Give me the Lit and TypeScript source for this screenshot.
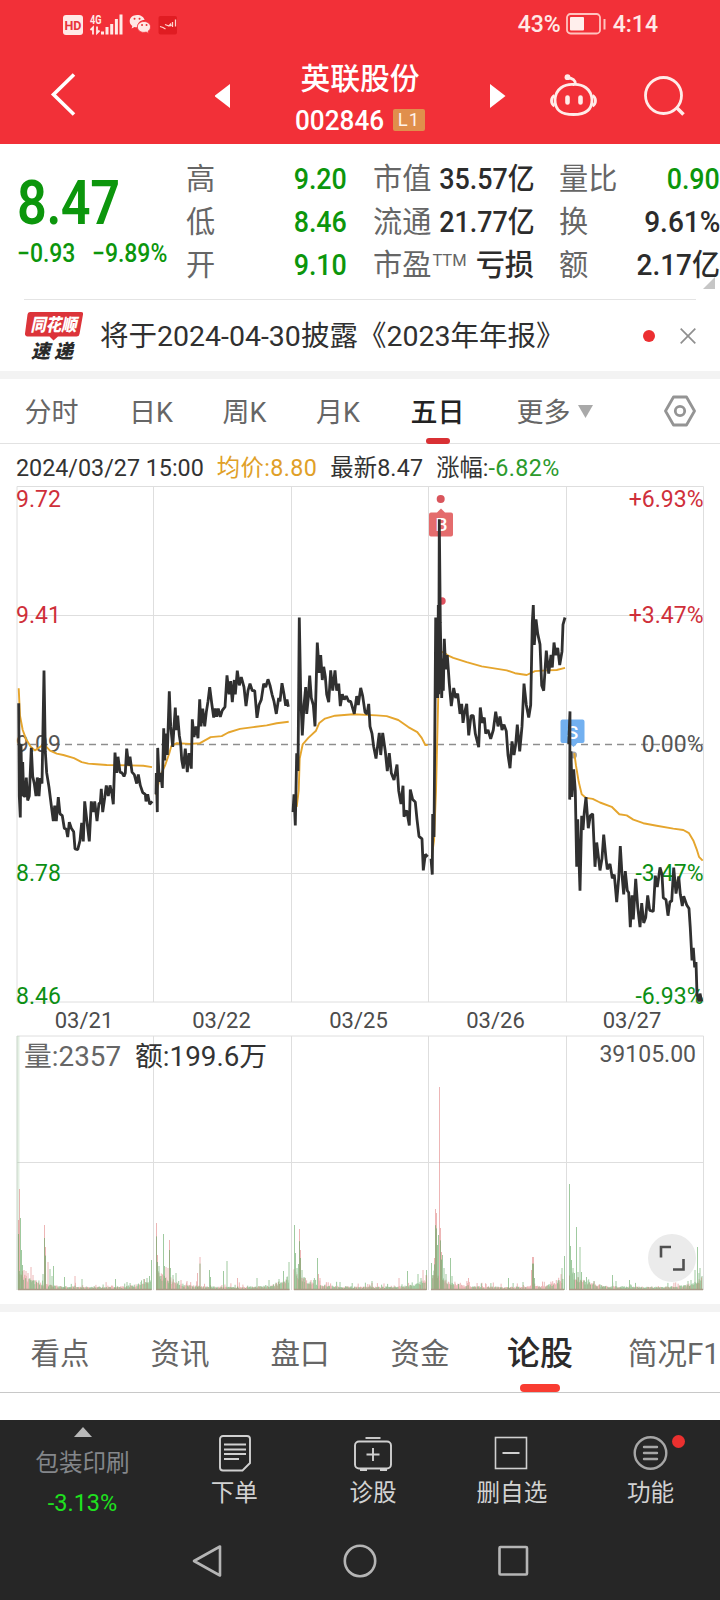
import { LitElement, html, svg, css } from "lit";
import { customElement } from "lit/decorators.js";

type Pt = [number, number];

interface Session {
  label: string;
  labelX: number;
  origin: number;
  price: string;
  average: string;
  from: number;
  to: number;
  spikes: Pt[];
  bias: number;
}

const SESSIONS: Session[] = [
  {
    label: "03/21", labelX: 84, origin: 0, from: 18.5, to: 151, bias: 0.5,
    price: "56,625 58,885 61,945 63,740 66,885 68,790 71,885 76,885 79,833 83,897 88,885 94,750 98,830 103,850 108,885 112,833 117,885 121,835 126,850 132,533 136,760 140,820 147,860 153,905 160,955 164,912 169,955 175,888 180,935 187,940 193,975 199,978 203,1000 208,958 214,975 221,985 225,1033 233,1035 240,1010 245,960 250,1012 254,900 260,950 268,1012 274,900 280,930 284,900 291,955 297,905 301,905 304,865 308,930 314,890 319,855 325,885 330,855 336,880 340,908 345,763 350,820 354,775 360,818 366,820 372,830 376,820 380,752 386,800 390,775 396,818 403,825 410,850 415,825 421,855 428,875 436,880 438,900 443,880 449,908 457,900",
    average: "56,583 60,660 68,700 78,725 92,747 105,757 132,740 150,758 170,766 190,770 222,779 245,790 265,794 290,796 320,798 390,799 430,800 456,804",
    spikes: [[18.5, 70], [19.5, 101], [20.5, 72], [21.5, 40], [22.5, 25], [24, 20], [26, 19], [28, 17], [31, 23], [33, 15], [36, 10], [43, 16], [44.5, 65], [45.5, 43], [48, 28], [50, 21], [52, 14], [53.5, 24], [64.5, 13], [75, 14], [82, 11], [115.5, 11], [127, 8], [141, 8], [147, 12], [149.5, 14], [151.5, 30]],
  },
  {
    label: "03/22", labelX: 221.5, origin: 0, from: 156.5, to: 289, bias: 0.45,
    price: "468,880 469,820 472,930 473,750 478,845 482,820 487,862 491,695 494,785 497,710 502,770 508,592 512,690 518,747 526,637 529,700 533,660 538,715 542,740 545,783 550,808 556,752 562,818 567,765 574,808 577,670 582,720 588,690 594,723 599,614 603,690 608,640 614,690 619,650 624,620 629,580 635,625 641,665 646,640 650,663 655,640 661,663 667,645 675,635 681,547 687,600 692,563 697,622 703,560 706,600 712,534 718,575 724,552 732,580 738,633 744,590 750,570 757,590 764,590 771,666 777,630 784,615 791,570 797,580 804,558 810,575 816,600 822,620 829,655 836,610 840,620 846,569 852,600 857,632 861,615 865,635",
    average: "468,882 480,830 495,800 508,765 514,745 530,737 570,739 600,737 632,720 665,717 685,707 720,697 760,692 800,687 830,681 866,677",
    spikes: [[156.5, 67], [157.5, 35], [159, 24], [161, 14], [163.5, 56], [164.5, 24], [166, 23], [168, 22], [169.5, 50], [170.5, 22], [173, 15], [176, 17], [181, 10], [187, 9], [197.5, 17], [200, 33], [209.5, 20], [210.5, 13], [223.5, 19], [227, 29], [237.5, 12], [257, 12], [269, 10], [279, 11], [283.5, 19], [287, 13], [289, 28]],
  },
  {
    label: "03/25", labelX: 358.5, origin: 280, from: 294, to: 427, bias: 0.55,
    price: "39,930 42,880 46,967 50,765 54,815 58,385 62,600 67,715 72,630 77,580 80,655 85,610 89,548 94,610 100,630 105,690 112,455 118,540 122,490 127,560 131,523 136,550 140,600 146,622 152,533 158,590 165,533 170,590 176,570 181,633 187,600 193,615 199,605 206,620 212,620 223,655 230,605 235,630 242,582 248,605 255,650 261,655 266,627 270,690 276,710 281,747 288,780 298,708 302,770 308,708 316,760 322,815 328,765 334,820 342,840 351,797 356,870 363,907 369,856 372,943 380,925 388,967 391,867 398,895 406,902 411,950 417,998 426,1005 430,1093 436,1048 443,1055",
    average: "50,915 56,870 59,780 68,740 85,722 108,702 118,680 135,668 165,660 220,656 290,659 320,661 355,672 385,692 412,706 425,722 436,742 443,742",
    spikes: [[294.5, 65], [295.5, 37], [297, 22], [298.5, 26], [299.5, 61], [300.5, 40], [302, 20], [304, 13], [311, 10], [317.5, 32], [318.5, 16], [320, 12], [340, 8], [372, 9], [399, 12], [407.5, 19], [418, 16], [421, 12], [423, 20], [426.5, 20]],
  },
  {
    label: "03/26", labelX: 495.5, origin: 280, from: 431.5, to: 563, bias: 0.3,
    price: "453,1060 457,1105 458,935 462,1000 467,385 469,610 471,385 473,610 475,350 476,600 478,110 481,400 485,610 488,500 490,590 493,445 497,530 502,490 508,570 514,633 521,582 527,610 533,598 540,655 545,627 549,680 554,650 560,627 566,715 573,660 580,660 586,710 596,748 601,637 607,680 613,665 617,710 624,700 632,725 640,700 647,649 654,690 660,662 666,700 672,685 679,703 684,770 690,807 696,732 702,770 707,740 712,685 719,760 726,690 732,570 739,630 746,665 752,630 757,400 760,350 763,462 768,390 773,430 780,460 785,575 791,590 799,478 806,542 813,490 817,525 822,455 827,490 833,470 839,518 846,480 849,405 855,385",
    average: "455,1055 462,1010 468,870 475,600 482,480 495,485 505,492 520,498 560,510 605,522 680,533 705,541 740,546 765,535 800,533 830,532 855,526",
    spikes: [[431.5, 27], [433, 15], [434.5, 32], [435.5, 81], [436.5, 77], [437.5, 45], [438.5, 55], [439.5, 203], [440.5, 62], [441.5, 38], [442.5, 35], [444, 22], [446, 16], [450.5, 32], [452, 14], [468.5, 12], [508.5, 12], [523, 8], [531.5, 20], [532.5, 33], [533.5, 33], [534.5, 12], [559, 10], [562, 22], [564.5, 34]],
  },
  {
    label: "03/27", labelX: 632, origin: 500, from: 569.5, to: 702, bias: 0.6,
    price: "206,740 210,648 209,895 213,760 216,887 221,810 226,870 230,1083 233,950 240,1150 245,940 249,980 253,930 258,888 265,975 271,940 278,935 285,1083 290,1015 300,1093 306,1060 311,993 318,1060 322,1090 330,1075 337,1115 343,1105 350,1182 356,1115 361,1025 366,1105 371,1160 376,1095 382,1150 386,1155 391,1252 396,1163 400,1230 407,1117 413,1195 420,1252 425,1185 431,1240 437,1225 443,1163 449,1205 460,1208 466,1108 472,1140 480,1085 486,1105 490,1170 498,1175 504,1220 510,1180 515,1180 521,1085 528,1158 536,1110 541,1160 547,1193 551,1165 560,1190 567,1200 571,1255 576,1345 580,1310 584,1365 588,1350 591,1440 597,1460 600,1438 605,1460",
    average: "223,765 228,800 236,845 245,880 258,890 278,893 300,903 335,915 358,936 380,939 400,951 430,961 470,968 520,976 550,980 567,989 580,1009 590,1034 597,1055 608,1066",
    spikes: [[569.5, 106], [570.5, 44], [571.5, 30], [573, 22], [574.5, 17], [576.5, 63], [578, 18], [580, 43], [581.5, 18], [586.5, 13], [594, 9], [612.5, 15], [616, 9], [629.5, 10], [688, 9], [691, 10], [695, 20], [697.5, 43], [699, 17], [700, 22], [702, 14]],
  },
];

const GRID_X = [17, 153.5, 291.5, 428.5, 566.5, 703.5];

/** Converts a packed series into plot coordinates. */
function trace(series: string, origin: number): string {
  return series
    .split(" ")
    .map((pair) => {
      const [x, y] = pair.split(",").map(Number);
      return `${(origin + x / 3).toFixed(1)},${(480 + y / 2.8).toFixed(1)}`;
    })
    .join(" ");
}

/** Background turnover: taller after the open and before the close. */
function volume(s: Session): { green: string; red: string } {
  let seed = Math.round(s.from * 13) + 7;
  const rnd = () => {
    seed = (seed * 1103515245 + 12345) % 2147483648;
    return seed / 2147483648;
  };
  let green = "";
  let red = "";
  const bar = (x: number, h: number) => `M${x.toFixed(1)} 1290v-${h.toFixed(1)}`;
  for (let x = s.from; x <= s.to; x += 0.6) {
    const t = (x - s.from) / (s.to - s.from);
    const env = 3 + 17 * Math.exp(-t * 9) + 9 * Math.exp(-(1 - t) * 12);
    const h = env * (0.6 + 0.5 * rnd()) + (rnd() > 0.85 ? 5 * rnd() : 0);
    if (rnd() < s.bias) green += bar(x, h);
    else red += bar(x, h);
  }
  s.spikes.forEach(([x, h], i) => {
    const up = (i * 7 + Math.round(x)) % 10 > s.bias * 10 || h > 150;
    if (up && s.label !== "03/27") red += bar(x, h);
    else green += bar(x, h);
    if (h > 30 && h < 100 && s.label !== "03/27") green += bar(x, h * 0.8);
  });
  return { green, red };
}

@customElement("stock-chart")
class StockChart extends LitElement {
  static styles = css`
    :host { display: block; position: relative; height: 824px; }
    .plot { display: block; width: 720px; height: 824px; }
    text { font-family: Roboto, "Noto Sans CJK SC", sans-serif; font-size: 23px; }
    .grid { stroke: #dedede; stroke-width: 1; fill: none; }
    .zero { stroke: #8e8e8e; stroke-width: 1.6; stroke-dasharray: 7 5; }
    .up { fill: #cf2f3a; }
    .down { fill: #0c8f14; }
    .flat { fill: #555; }
    .date { fill: #4c4c4c; font-size: 22px; text-anchor: middle; }
    .end { text-anchor: end; }
    .avg { fill: none; stroke: #e5a52d; stroke-width: 1.9; stroke-linejoin: round; }
    .price { fill: none; stroke: #303030; stroke-width: 2.8; stroke-linejoin: bevel; }
    .green { stroke: #62a862; stroke-width: 1; opacity: 0.6; }
    .red { stroke: #dc7070; stroke-width: 1; opacity: 0.5; }
    .mark { fill: #fff; font-size: 19px; font-weight: 500; text-anchor: middle; }
    .qty { fill: #666; font-size: 27.8px; }
    .amt { fill: #333; font-size: 27.8px; }
    .expand {
      position: absolute; left: 648px; top: 754px; width: 48px; height: 48px;
      border-radius: 50%; background: #ebebeb;
    }
  `;

  render() {
    return html`
      <svg class="plot" viewBox="0 480 720 824">
        <path class="grid" d="M17 486.5H703.5M17 615.5H703.5M17 873.5H703.5M17 1002H703.5M17 1036H703.5M17 1162.5H703.5" />
        ${GRID_X.map((x) => svg`<path class="grid" d="M${x} 486.500V1002M${x} 1036V1290" />`)}
        <path class="zero" d="M17 744.500H703" />
        <rect x="16.500" y="1036" width="3" height="254" fill="#9cc79c" opacity=".27" />
        ${SESSIONS.map((s) => {
          const v = volume(s);
          return svg`<path class="red" d=${v.red} /><path class="green" d=${v.green} />`;
        })}
        <path d="M18 1289.500H151.500M156 1289.500H289.500M294 1289.500H426.500M431 1289.500H564M569 1289.500H703" stroke="#a89a86" stroke-width="1.300" />

        <text class="up" x="16" y="507">9.72</text>
        <text class="up" x="16" y="622.500">9.41</text>
        <text class="flat" x="16" y="752">9.09</text>
        <text class="down" x="16" y="881">8.78</text>
        <text class="down" x="16" y="1003.500">8.46</text>
        <text class="up end" x="703.500" y="507">+6.93%</text>
        <text class="up end" x="703.500" y="622.500">+3.47%</text>
        <text class="flat end" x="703.500" y="752">0.00%</text>
        <text class="down end" x="703.500" y="881">-3.47%</text>
        <text class="down end" x="703.500" y="1003.500">-6.93%</text>

        <circle cx="440.700" cy="499" r="4" fill="#d9555c" />
        <path d="M431 512.500h6l4-4 4 4h6a2 2 0 0 1 2 2v20a2 2 0 0 1-2 2h-20a2 2 0 0 1-2-2v-20a2 2 0 0 1 2-2z" fill="#e46c6d" />
        <text class="mark" x="441.500" y="531">B</text>
        <circle cx="442" cy="601" r="3.700" fill="#e0525f" />
        <path d="M562.500 719.500h20a2 2 0 0 1 2 2v19.500a2 2 0 0 1-2 2h-5l-4 4-4-4h-7a2 2 0 0 1-2-2V721.500a2 2 0 0 1 2-2z" fill="#72b0f0" />
        <text class="mark" x="572.500" y="738.500">S</text>
        <circle cx="573.500" cy="755" r="3.500" fill="#a0a4ac" />

        ${SESSIONS.map(
          (s) => svg`
            <polyline class="avg" points=${trace(s.average, s.origin)} />
            <polyline class="price" points=${trace(s.price, s.origin)} />
            <text class="date" x=${s.labelX} y="1028">${s.label}</text>`
        )}
        <text class="qty" x="24" y="1066">量:2357</text>
        <text class="amt" x="135" y="1066">额:199.6万</text>
        <text class="flat end" x="696" y="1062">39105.00</text>
      </svg>
      <svg class="expand" viewBox="0 0 48 48" fill="none" stroke="#505050" stroke-width="2.600">
        <path d="M13 23.500V13H23M35.500 25V35.500H25" />
      </svg>
    `;
  }
}

@customElement("app-root")
class AppRoot extends LitElement {
  static styles = css`
    :host {
      display: flex; flex-direction: column; width: 720px; height: 1600px; overflow: hidden;
      background: #fff; color: #333; line-height: 1;
      font-family: Roboto, "Noto Sans CJK SC", sans-serif;
    }
    * { box-sizing: border-box; }
    svg { display: block; flex: none; }

    .header { height: 144px; background: #f23038; color: #fff; display: flex; flex-direction: column; flex: none; }
    .status { height: 48px; padding: 0 62px 0 63px; display: flex; align-items: center; justify-content: space-between; }
    .clock { display: flex; align-items: center; font-size: 23px; font-weight: 500; color: #ffe9e6; gap: 5px; }
    .clock span { padding-top: 1px; }
    .clock .time { margin-left: 2px; }
    .bar { height: 96px; display: grid; grid-template-columns: 295px 1fr 295px; }
    .left { display: flex; align-items: flex-start; padding: 25px 0 0 50px; gap: 139px; }
    .left .tri, .right .tri { margin-top: 10px; }
    .right { display: flex; align-items: flex-start; padding: 25px 0 0 65px; }
    .robot { margin-left: 43px; }
    .search { margin-left: 45px; margin-top: -3px; }
    .title { display: flex; flex-direction: column; align-items: center; padding-top: 15px; white-space: nowrap; }
    .name { font-size: 29.8px; font-weight: 500; line-height: 32px; }
    .code { display: flex; align-items: center; margin-top: 12px; height: 26px; align-self: flex-start; }
    .code .num { font-size: 27.5px; font-weight: 500; width: 89px; padding-top: 1px; }
    .code .num i { font-style: normal; display: inline-block; transform: scaleX(0.95); transform-origin: 0 50%; }
    .l1 { width: 32px; height: 22px; border-radius: 2px; background: #e08f4c; font-size: 18.5px; line-height: 22px; text-align: center; margin-left: 9px; letter-spacing: 1px; color: #fff3ea; }

    .quote { position: relative; height: 155px; flex: none; display: grid; grid-template-columns: 186px 161px 26px 161px 25px 161px; }
    .last { padding: 31px 0 0 17px; color: #0c960c; white-space: nowrap; }
    .big { font-size: 61.5px; font-weight: 600; line-height: 56px; transform: scaleX(0.85); transform-origin: 0 0; letter-spacing: -0.5px; }
    .chg { display: flex; margin-top: 8px; font-size: 25.5px; font-weight: 500; line-height: 28px; }
    .chg span { transform: scaleX(0.9); transform-origin: 0 0; width: 75px; }
    .col { display: flex; flex-direction: column; padding-top: 13.5px; font-size: 29.2px; white-space: nowrap; }
    .row { height: 43.3px; display: flex; align-items: center; justify-content: space-between; color: #666; }
    .row b { font-weight: 500; color: #2c2c2c; display: inline-block; transform: scaleX(0.92); transform-origin: 100% 50%; }
    .row b.g { color: #0c960c; }
    .row b.w { transform: scaleX(0.96); }
    .row b.cn { transform: none; }
    .row .ttm { font-size: 16.5px; align-self: flex-start; margin: 9px auto 0 1px; }
    .fold { position: absolute; right: 5px; bottom: 10px; }
    .rule { height: 1px; margin: 0 24px; background: #e4e4e4; flex: none; }

    .news { height: 71px; flex: none; display: flex; align-items: center; padding: 0 24px; }
    .news .msg { font-size: 28.5px; margin-left: 15px; padding-top: 4px; flex: 1; white-space: nowrap; color: #303030; }
    .dot { width: 12px; height: 12px; border-radius: 50%; background: #ec2f31; margin-right: 25px; }
    .logo { font-family: "Noto Sans CJK SC", sans-serif; font-weight: 900; font-style: italic; overflow: visible; }

    .band { height: 8px; background: #f3f3f3; flex: none; }
    .periods { height: 65px; flex: none; display: flex; align-items: center; padding: 0 24px 1px 24.5px; font-size: 27px; color: #666; border-bottom: 1px solid #e2e2e2; white-space: nowrap; }
    .periods > span { padding-top: 5px; }
    .periods .p1 { width: 104.5px; }
    .periods .p2 { width: 93.5px; }
    .periods .p3 { width: 93.5px; }
    .periods .p4 { width: 94.5px; }
    .periods .p5 { width: 106px; }
    .periods .more { display: flex; align-items: center; gap: 7px; flex: 1; }
    .periods .more svg { margin-top: -4px; }
    .on { position: relative; color: #222; font-weight: 500; }
    .on::after { content: ""; position: absolute; left: 15.5px; bottom: -17px; width: 24px; height: 6px; border-radius: 3px; background: #d93034; }
    .info { height: 36px; flex: none; display: flex; align-items: center; padding: 13px 0 0 16px; font-size: 23.3px; color: #333; white-space: pre; }
    .info .y { color: #e0a028; margin: 0 13px; letter-spacing: 0.4px; }
    .info .n { letter-spacing: 0.15px; }
    .info .r { margin-left: 13px; }
    .info .g { color: #2c9a2c; letter-spacing: 0.4px; }

    .tabs { height: 81px; flex: none; display: flex; border-bottom: 1px solid #c8c8c8; font-size: 29.5px; color: #666; white-space: nowrap; }
    .tab { width: 120px; flex: none; text-align: center; line-height: 80px; padding-top: 2px; position: relative; }
    .tab.last-tab { text-align: left; padding-left: 28px; }
    .tab.sel { font-size: 33px; font-weight: 500; color: #2b2b2b; }
    .tab.sel::after { content: ""; position: absolute; left: 40px; bottom: 0; width: 40px; height: 8px; border-radius: 4px; background: #f93c31; }
    .gap { height: 27px; flex: none; }

    .dock { height: 100px; flex: none; background: #262626; display: grid; grid-template-columns: 165px repeat(4, 138.75px); color: #d2d2d2; font-size: 23.6px; }
    .sector { display: flex; flex-direction: column; align-items: center; padding-top: 7px; color: #84878b; }
    .sector .nm { margin-top: 14px; line-height: 24px; }
    .sector .pc { margin-top: 16px; color: #1fe01f; font-size: 23.5px; line-height: 24px; }
    .act { position: relative; display: flex; flex-direction: column; align-items: center; padding-top: 12px; }
    .act span { margin-top: 7px; line-height: 24px; }
    .badge { position: absolute; left: 91px; top: 15px; width: 13px; height: 13px; border-radius: 50%; background: #ea302f; }
    .nav { height: 80px; flex: none; background: #262626; display: flex; justify-content: center; padding: 23px 0 0 0; gap: 118.5px; }
  `;

  render() {
    return html`
      <div class="header">
        <div class="status">
          <svg width="116" height="24" viewBox="0 0 116 24">
            <rect x="0" y="3" width="20" height="20" rx="3" fill="#ffe9e6" />
            <text x="10" y="17.500" font-size="12.500" font-weight="700" fill="#e8333a" text-anchor="middle" font-family="Roboto">HD</text>
            <text x="27" y="11.500" font-size="12" font-weight="700" fill="#ffe9e6" textLength="11.500" lengthAdjust="spacingAndGlyphs" font-family="Roboto">4G</text>
            <path d="M27.500 18l2.500-2.500v7M36.500 18.500l-2.500 2.500v-6.500" stroke="#ffe9e6" stroke-width="1.800" fill="none" />
            <path d="M39.500 22.500v-3M44 22.500V15M48.700 22.500V12M53.400 22.500V7M58 22.500V2.500" stroke="#ffe9e6" stroke-width="3" />
            <path d="M74 3c-4.300 0-7.300 2.800-7.300 6.200 0 2 1 3.600 2.600 4.700l-.7 2.600 2.900-1.500c1 .3 1.900.4 2.900.3 0-5 3.500-7.300 7.200-7.200C80.800 5 78 3 74 3z" fill="#ffe9e6" />
            <path d="M81 9.500c-3.800 0-6.600 2.300-6.600 5.400s2.800 5.500 6.600 5.500c.8 0 1.500-.1 2.200-.3l2.500 1.400-.6-2.300c1.500-1 2.400-2.500 2.400-4.300 0-3.100-2.900-5.400-6.500-5.400z" fill="#ffe9e6" stroke="#f23038" stroke-width=".8" />
            <path d="M71.500 6.800h.1M76.500 6.800h.1M79 13h.1M83.500 13h.1" stroke="#e8333a" stroke-width="1.900" stroke-linecap="round" />
            <rect x="95.500" y="4" width="18.500" height="18.500" rx="2" fill="#e01c22" />
            <path d="M97 14.500l3 1 2.500 1.500M102 12.500l4 1.500 2-2.500M107 14l1.500-1M109.500 10v5M112.500 7.500v7" stroke="#ffd3cc" stroke-width="1.300" fill="none" />
          </svg>
          <div class="clock">
            <span>43%</span>
            <svg width="40" height="22" viewBox="0 0 40 22">
              <rect x="1" y="1" width="33" height="19.500" rx="3.500" fill="none" stroke="#ffc4bf" stroke-width="1.800" />
              <rect x="4" y="4" width="14" height="13.500" rx="1" fill="#ffefec" />
              <path d="M38.500 6v10.500" stroke="#ffc4bf" stroke-width="2" />
            </svg>
            <span class="time">4:14</span>
          </div>
        </div>
        <div class="bar">
          <div class="left">
            <svg width="26" height="44" viewBox="0 0 26 44"><path d="M24 1.500L3.500 21.500L24 41.500" stroke="#fff" stroke-width="3.600" fill="none" /></svg>
            <svg class="tri" width="16" height="26" viewBox="0 0 16 26"><path d="M15 1v24L-.5 13z" fill="#fff" /></svg>
          </div>
          <div class="title">
            <div class="name">英联股份</div>
            <div class="code"><span class="num"><i>002846</i></span><span class="l1">L1</span></div>
          </div>
          <div class="right">
            <svg class="tri" width="16" height="26" viewBox="0 0 16 26"><path d="M0 1v24L15.500 13z" fill="#fff" /></svg>
            <svg class="robot" width="48" height="46" viewBox="0 0 48 46" fill="none" stroke="#ffece9" stroke-width="2.800">
              <path d="M24.500 11.500C33.500 11 42.500 15.500 43 27C43 38.500 35 41.500 24.500 41.500S6 38.500 6 27C6.500 15.500 15.500 11 24.500 11.500z" />
              <path d="M26.500 11.500C26.500 7 24 5.500 18 4.500" />
              <circle cx="18.500" cy="4.200" r="2.900" fill="#ffece9" stroke="none" />
              <path d="M5.500 22.500C1.500 25 1.500 30.500 5.500 33M43.500 22.500C47.500 25 47.500 30.500 43.500 33" />
              <path d="M18.500 24.500v5M31.500 24.500v5" stroke-width="4.600" stroke-linecap="round" />
            </svg>
            <svg class="search" width="44" height="48" viewBox="0 0 44 48" fill="none" stroke="#ffece9" stroke-width="2.800">
              <circle cx="21.500" cy="25.500" r="18" /><path d="M34.500 37.500L41.500 44.500" stroke-width="3.500" />
            </svg>
          </div>
        </div>
      </div>

      <div class="quote">
        <div class="last">
          <div class="big">8.47</div>
          <div class="chg"><span>−0.93</span><span>−9.89%</span></div>
        </div>
        <div class="col">
          <div class="row">高<b class="g">9.20</b></div>
          <div class="row">低<b class="g">8.46</b></div>
          <div class="row">开<b class="g">9.10</b></div>
        </div>
        <div></div>
        <div class="col">
          <div class="row">市值<b>35.57亿</b></div>
          <div class="row">流通<b>21.77亿</b></div>
          <div class="row">市盈<span class="ttm">TTM</span><b class="cn">亏损</b></div>
        </div>
        <div></div>
        <div class="col">
          <div class="row">量比<b class="g">0.90</b></div>
          <div class="row">换<b class="w">9.61%</b></div>
          <div class="row">额<b class="w">2.17亿</b></div>
        </div>
        <svg class="fold" width="12" height="12" viewBox="0 0 12 12"><path d="M12 0v12H0z" fill="#c6c6c6" /></svg>
      </div>
      <div class="rule"></div>

      <div class="news">
        <svg class="logo" width="61" height="56" viewBox="0 -4 61 56">
          <path d="M6 0H57a2 2 0 0 1 2 2.400L55.500 22a3 3 0 0 1-3 2.500H34l-4.500 4-4-4H3.500A2.500 2.500 0 0 1 1 21.500L3.500 2.400A2.600 2.600 0 0 1 6 0z" fill="#dc343a" />
          <text x="6.500" y="19" font-size="17.500" fill="#fff" textLength="46" lengthAdjust="spacingAndGlyphs">同花顺</text>
          <text x="7" y="45.500" font-size="19" fill="#2a2a2a">速</text>
          <text x="30" y="45.500" font-size="19" fill="#2a2a2a">递</text>
        </svg>
        <span class="msg">将于2024-04-30披露《2023年年报》</span>
        <span class="dot"></span>
        <svg width="16" height="16" viewBox="0 0 16 16"><path d="M.7.7l14.600 14.600M15.300.7L.7 15.300" stroke="#8f8f8f" stroke-width="1.700" /></svg>
      </div>

      <div class="band"></div>
      <div class="periods">
        <span class="p1">分时</span><span class="p2">日K</span><span class="p3">周K</span><span class="p4">月K</span>
        <span class="p5 on">五日</span>
        <span class="more">更多<svg width="15" height="13" viewBox="0 0 15 13"><path d="M0 0h15L7.500 13z" fill="#a9a9a9" /></svg></span>
        <svg width="32" height="32" viewBox="0 0 32 32" fill="none" stroke="#949494" stroke-width="2.800" stroke-linejoin="round">
          <path d="M9.500 2h13L30.500 16l-8 14h-13L1.500 16z" /><circle cx="16" cy="16" r="4.700" />
        </svg>
      </div>
      <div class="info"><span>2024/03/27 15:00</span><span class="y">均价:8.80</span><span class="n">最新8.47</span><span class="r">涨幅:</span><span class="g">-6.82%</span></div>
      <stock-chart></stock-chart>

      <div class="band"></div>
      <div class="tabs">
        <span class="tab">看点</span><span class="tab">资讯</span><span class="tab">盘口</span><span class="tab">资金</span>
        <span class="tab sel">论股</span><span class="tab last-tab">简况F1</span>
      </div>
      <div class="gap"></div>

      <div class="dock">
        <div class="sector">
          <svg width="18" height="10" viewBox="0 0 18 10"><path d="M9 0l9 10H0z" fill="#b8b8b8" /></svg>
          <span class="nm">包装印刷</span><span class="pc">-3.13%</span>
        </div>
        <div class="act">
          <svg width="38" height="42" viewBox="0 0 38 42" fill="none" stroke="#d0d0d0" stroke-width="1.900">
            <path d="M8 4H32a3 3 0 0 1 3 3V31l-7.500 7.500H8a3 3 0 0 1-3-3V7a3 3 0 0 1 3-3z" />
            <path d="M9 12.500H31M9 17.500H31M9 22H31M9 27H24" />
          </svg><span>下单</span>
        </div>
        <div class="act">
          <svg width="42" height="42" viewBox="0 0 42 42" fill="none" stroke="#d0d0d0" stroke-width="1.900">
            <rect x="3" y="9.500" width="36" height="27" rx="4" /><path d="M13.500 6h15" />
            <path d="M8 38h7M28 38h7" stroke-width="2.200" /><path d="M14.500 22.500h13M21 16v13" />
          </svg><span>诊股</span>
        </div>
        <div class="act">
          <svg width="38" height="42" viewBox="0 0 38 42" fill="none" stroke="#d0d0d0" stroke-width="1.600">
            <rect x="2.500" y="5.500" width="31" height="31" /><path d="M9.500 21h17" stroke-width="2" />
          </svg><span>删自选</span>
        </div>
        <div class="act">
          <svg width="38" height="42" viewBox="0 0 38 42" fill="none" stroke="#a6a6a6" stroke-width="2.400">
            <circle cx="18.500" cy="21" r="15.800" /><path d="M12 15h13M12 21h13M12 27h13" stroke-linecap="round" />
          </svg><span>功能</span><i class="badge"></i>
        </div>
      </div>
      <div class="nav">
        <svg width="34" height="36" viewBox="0 0 34 36" fill="none" stroke="#b5b5b5" stroke-width="2.600" stroke-linejoin="round"><path d="M30 3.500V32.500L4 18z" /></svg>
        <svg width="36" height="36" viewBox="0 0 36 36" fill="none" stroke="#b5b5b5" stroke-width="2.600"><circle cx="18" cy="18" r="15.200" /></svg>
        <svg width="34" height="36" viewBox="0 0 34 36" fill="none" stroke="#b5b5b5" stroke-width="2.600" stroke-linejoin="round"><rect x="2.500" y="4" width="27.500" height="27.500" rx="1" /></svg>
      </div>
    `;
  }
}
